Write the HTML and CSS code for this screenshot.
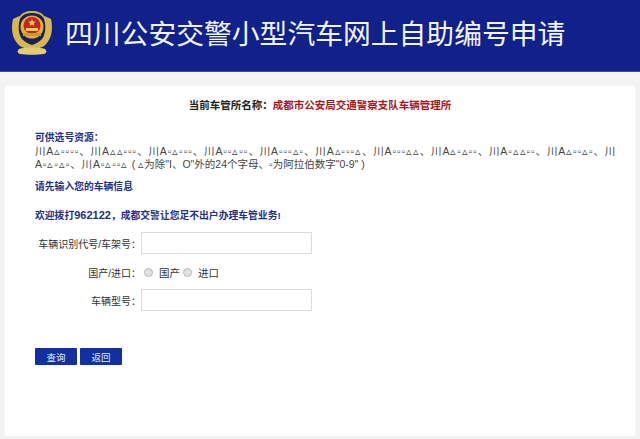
FILE: index.html
```html
<!DOCTYPE html>
<html lang="zh-CN">
<head>
  <meta charset="UTF-8" />
  <meta name="viewport" content="width=device-width, initial-scale=1.0"/>
  <title>四川公安交警小型汽车网上自助编号申请</title>
  <link rel="stylesheet" href="styles.css">
</head>
<body>
  <header class="banner">
    <svg class="badge" width="46" height="46" viewBox="0 0 46 46" aria-hidden="true">
      <path d="M23 1 C29 1 33 3 35 6 C38 7 40 8 42 9 C44 18 43 27 38 33 C35 37 30 39 23 39 C16 39 11 37 8 33 C3 27 2 18 4 9 C6 8 8 7 11 6 C13 3 17 1 23 1 Z" fill="#d8b84e"/>
      <path d="M23 3 C29 3 33 5 35 9 C37 15 37 24 33 29 C30 32 27 34 23 35 C19 34 16 32 13 29 C9 24 9 15 11 9 C13 5 17 3 23 3 Z" fill="#16215e"/>
      <circle cx="23" cy="17" r="11.5" fill="#e0b23c"/>
      <circle cx="23" cy="15.5" r="8.5" fill="#c9221f"/>
      <path d="M23 9 l1.1 2.4 2.6 .3 -1.9 1.8 .5 2.6 -2.3 -1.3 -2.3 1.3 .5 -2.6 -1.9 -1.8 2.6 -.3 Z" fill="#f2d25c"/>
      <rect x="17" y="18" width="12" height="3" fill="#efcf56"/>
      <rect x="14" y="23" width="18" height="3" fill="#c99a35"/>
      <path d="M10 39 C15 37 31 37 36 39 C38 41 38 43 35 44 C29 45 17 45 11 44 C8 43 8 41 10 39 Z" fill="#e2cc72"/>
    </svg>
    <h1 class="banner-title">四川公安交警小型汽车网上自助编号申请</h1>
  </header>

  <main class="panel">
    <p class="office">当前车管所名称：<span class="office-name">成都市公安局交通警察支队车辆管理所</span></p>

    <div class="info">
      <p class="info-title info-head">可供选号资源：</p>
      <p class="numbers">川A▵▫▫▫▫、川A▵▵▫▫▫、川A▫▵▫▫▫、川A▫▫▵▫▫、川A▫▫▫▵▫、川A▵▫▫▫▵、川A▫▫▫▵▵、川A▵▫▵▫▫、川A▫▵▵▫▫、川A▵▫▫▵▫、川<br>A▫▵▫▵▫、川A▫▵▫▫▵ <span class="numbers-note">( ▵为除"I、O"外的24个字母、▫为阿拉伯数字"0-9" )</span></p>
      <p class="info-title prompt">请先输入您的车辆信息</p>
      <p class="info-title hotline">欢迎拨打<span class="hotline-num">962122</span>，成都交警让您足不出户办理车管业务!</p>
    </div>

    <form class="vehicle-form">
      <div class="row">
        <label class="row-label" for="vin">车辆识别代号/车架号：</label>
        <input class="text-input" type="text" id="vin" />
      </div>
      <div class="row row-radio">
        <span class="row-label">国产/进口：</span>
        <label class="radio"><input type="radio" name="origin" />国产</label>
        <label class="radio"><input type="radio" name="origin" />进口</label>
      </div>
      <div class="row">
        <label class="row-label" for="model">车辆型号：</label>
        <input class="text-input" type="text" id="model" />
      </div>
      <div class="actions">
        <button class="btn" type="button">查询</button>
        <button class="btn" type="button">返回</button>
      </div>
    </form>
  </main>
</body>
</html>
```

FILE: styles.css
```css
html, body {
  height: 100%;
}
body {
  margin: 0;
  background: #f3f3f3;
  font-family: "Liberation Sans", "Noto Sans CJK SC", sans-serif;
  font-size: 10.5px;
  color: #333;
  overflow: hidden;
}
p {
  margin: 0;
}
.banner {
  height: 72px;
  box-sizing: border-box;
  background: #10218a;
  border-bottom: 1px solid #3a4a9c;
  display: flex;
  align-items: center;
  padding: 0 0 6px 9px;
  gap: 10px;
}
.badge {
  flex: none;
}
.banner-title {
  margin: 0;
  color: #f2f4fb;
  font-family: "Noto Sans CJK SC", sans-serif;
  font-size: 27.8px;
  font-weight: 400;
  line-height: 1;
}
.panel {
  margin: 14px 5px 0;
  height: 350px;
  background: #fff;
  padding: 0 30px;
}
.office {
  padding-top: 11px;
  height: 16px;
  line-height: 16px;
  text-align: center;
  font-weight: bold;
  color: #222;
}
.office-name {
  color: #a5161c;
}
.info {
  margin-top: 18px;
}
.info-title {
  color: #1d2f86;
  font-size: 9.8px;
  font-weight: bold;
  line-height: 13px;
}
.info-head {
  margin-bottom: 1px;
}
.numbers {
  white-space: nowrap;
  line-height: 13px;
  letter-spacing: 0.84px;
  color: #444;
}
.numbers-note {
  letter-spacing: 0;
}
.prompt {
  margin-top: 9px;
}
.hotline {
  margin-top: 16px;
}
.hotline-num {
  font-size: 11px;
}
.vehicle-form {
  margin-top: 10px;
}
.row {
  display: flex;
  align-items: center;
  height: 22px;
  margin-bottom: 7px;
}
.row-radio {
  margin-bottom: 6px;
}
.row-label {
  width: 106px;
  font-size: 10px;
  text-align: right;
  flex: none;
  white-space: nowrap;
}
.text-input {
  width: 171px;
  height: 22px;
  box-sizing: border-box;
  border: 1px solid #dcdcdc;
  background: #fff;
  padding: 0 4px;
  margin: 0;
}
.radio {
  display: flex;
  align-items: center;
  margin-left: 3px;
}
.radio input {
  appearance: none;
  width: 9px;
  height: 9px;
  margin: 0 6px 0 0;
  border-radius: 50%;
  border: 1px solid #b5b5b5;
  background: #e2e2e2;
  box-sizing: border-box;
}
.actions {
  display: flex;
  gap: 3px;
  margin-top: 37px;
}
.btn {
  width: 42px;
  height: 17px;
  padding: 0;
  border: none;
  border-radius: 1px;
  background: #12309f;
  color: #e8ecf8;
  font-family: inherit;
  font-size: 9.5px;
}
```
